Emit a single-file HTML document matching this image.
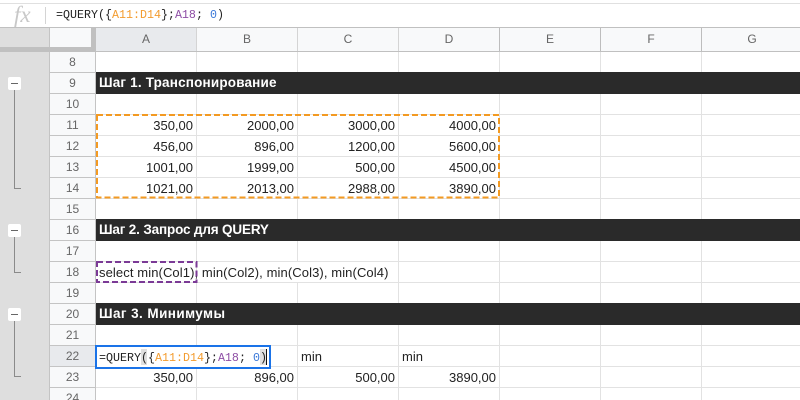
<!DOCTYPE html>
<html><head><meta charset="utf-8">
<style>
html,body{margin:0;padding:0;background:#fff}
#p{position:relative;width:800px;height:400px;overflow:hidden;background:#fff;font-family:"Liberation Sans",sans-serif;color:#222}
#p div{position:absolute;box-sizing:border-box}
#p svg{position:absolute;left:0;top:0}
.h{background:#e2e2e2;height:1px;left:96px;width:704px}
.v{background:#e2e2e2;width:1px;top:52px;height:348px}
.rn{left:50px;width:45px;height:20px;text-align:center;font:12px/20px "Liberation Sans",sans-serif;color:#666}
.rl{left:50px;width:45px;height:1px;background:#c4c4c4}
.ch{top:28px;height:23px;text-align:center;font:12px/23px "Liberation Sans",sans-serif;color:#666}
.cv{top:28px;height:23px;width:1px;background:#bdbdbd}
.c{font-size:13px;line-height:21px;height:21px;white-space:nowrap;color:#222}
.r{text-align:right;width:97px}
.bar{left:96px;width:704px;background:#2a2a2a;color:#fff;font-weight:bold;font-size:13.5px;line-height:22px;padding-left:3px;height:22px;white-space:nowrap}
.m{font-family:"Liberation Mono",monospace;white-space:pre}
.o{color:#f39c2f}.pu{color:#8e4ea5}.b{color:#3a78d8}
.gb{left:8px;width:13px;height:13px;background:#fff;border-radius:2px}
.gb i{position:absolute;left:3px;top:6px;width:7px;height:1px;background:#666}
.gl{background:#8a8a8a;width:1px;left:14px}
.gh{background:#8a8a8a;height:1px;left:14px;width:7px}
</style></head><body><div id="p">
<!-- formula bar -->
<div style="left:0;top:3px;width:800px;height:1px;background:#e0e0e0"></div>
<div style="left:14px;top:4px;width:20px;height:22px;font:italic 23px/22px 'Liberation Serif',serif;color:#c8c8c8">fx</div>
<div style="left:45px;top:7px;width:1px;height:17px;background:#d4d4d4"></div>
<div class="m" style="left:56px;top:7px;height:16px;font-size:11.67px;line-height:16px;color:#222">=QUERY({<span class="o">A11:D14</span>};<span class="pu">A18</span>; <span class="b">0</span>)</div>
<div style="left:0;top:27px;width:800px;height:1px;background:#c0c0c0"></div>

<!-- left gutter -->
<div style="left:0;top:28px;width:50px;height:372px;background:#dedede"></div>
<div style="left:49px;top:28px;width:1px;height:372px;background:#c4c4c4"></div>
<div style="left:50px;top:28px;width:41px;height:19px;background:#f8f9fa"></div>
<div style="left:91px;top:28px;width:5px;height:23px;background:#c0c0c0"></div>
<div style="left:0;top:47px;width:96px;height:5px;background:#c0c0c0"></div>
<div style="left:50px;top:52px;width:45px;height:348px;background:#f8f9fa"></div>
<div style="left:95px;top:52px;width:1px;height:348px;background:#c4c4c4"></div>

<!-- column header -->
<div style="left:96px;top:28px;width:704px;height:23px;background:#f8f9fa"></div>
<div style="left:96px;top:28px;width:100px;height:23px;background:#e8eaed"></div>
<div style="left:96px;top:51px;width:704px;height:1px;background:#c0c0c0"></div>
<div class="ch" style="left:96px;width:100px">A</div>
<div class="ch" style="left:197px;width:100px">B</div>
<div class="ch" style="left:298px;width:100px">C</div>
<div class="ch" style="left:399px;width:100px">D</div>
<div class="ch" style="left:500px;width:100px">E</div>
<div class="ch" style="left:601px;width:100px">F</div>
<div class="ch" style="left:702px;width:100px">G</div>
<div class="cv" style="left:196px;background:#d4d4d4"></div>
<div class="cv" style="left:297px;background:#d4d4d4"></div>
<div class="cv" style="left:398px;background:#d4d4d4"></div>
<div class="cv" style="left:499px"></div>
<div class="cv" style="left:600px"></div>
<div class="cv" style="left:701px"></div>

<!-- grid -->
<div class="v" style="left:196px"></div><div class="v" style="left:297px"></div><div class="v" style="left:398px"></div><div class="v" style="left:499px"></div><div class="v" style="left:600px"></div><div class="v" style="left:701px"></div>
<div class="h" style="top:72px"></div><div class="h" style="top:93px"></div><div class="h" style="top:114px"></div><div class="h" style="top:135px"></div><div class="h" style="top:156px"></div><div class="h" style="top:177px"></div><div class="h" style="top:198px"></div><div class="h" style="top:219px"></div><div class="h" style="top:240px"></div><div class="h" style="top:261px"></div><div class="h" style="top:282px"></div><div class="h" style="top:303px"></div><div class="h" style="top:324px"></div><div class="h" style="top:345px"></div><div class="h" style="top:366px"></div><div class="h" style="top:387px"></div>
<div style="left:197px;top:262px;width:200px;height:20px;background:#fff"></div>

<!-- row numbers -->
<div class="rl" style="top:72px"></div><div class="rl" style="top:93px"></div><div class="rl" style="top:114px"></div><div class="rl" style="top:135px"></div><div class="rl" style="top:156px"></div><div class="rl" style="top:177px"></div><div class="rl" style="top:198px"></div><div class="rl" style="top:219px"></div><div class="rl" style="top:240px"></div><div class="rl" style="top:261px"></div><div class="rl" style="top:282px"></div><div class="rl" style="top:303px"></div><div class="rl" style="top:324px"></div><div class="rl" style="top:345px"></div><div class="rl" style="top:366px"></div><div class="rl" style="top:387px"></div>
<div style="left:50px;top:346px;width:45px;height:20px;background:#e8eaed"></div>
<div class="rn" style="top:52px">8</div><div class="rn" style="top:73px">9</div><div class="rn" style="top:94px">10</div><div class="rn" style="top:115px">11</div><div class="rn" style="top:136px">12</div><div class="rn" style="top:157px">13</div><div class="rn" style="top:178px">14</div><div class="rn" style="top:199px">15</div><div class="rn" style="top:220px">16</div><div class="rn" style="top:241px">17</div><div class="rn" style="top:262px">18</div><div class="rn" style="top:283px">19</div><div class="rn" style="top:304px">20</div><div class="rn" style="top:325px">21</div><div class="rn" style="top:346px">22</div><div class="rn" style="top:367px">23</div><div class="rn" style="top:388px">24</div>

<!-- group controls -->
<div class="gb" style="top:77px"><i></i></div><div class="gl" style="top:90px;height:98px"></div><div class="gh" style="top:188px"></div>
<div class="gb" style="top:224px"><i></i></div><div class="gl" style="top:237px;height:35px"></div><div class="gh" style="top:272px"></div>
<div class="gb" style="top:308px"><i></i></div><div class="gl" style="top:321px;height:56px"></div><div class="gh" style="top:376px"></div>

<!-- dark bars -->
<div class="bar" style="top:72px;letter-spacing:.18px">Шаг 1. Транспонирование</div>
<div class="bar" style="top:219px;letter-spacing:-.16px">Шаг 2. Запрос для QUERY</div>
<div class="bar" style="top:303px;letter-spacing:.42px">Шаг 3. Минимумы</div>

<!-- data -->
<div class="c r" style="left:96px;top:115px">350,00</div><div class="c r" style="left:197px;top:115px">2000,00</div><div class="c r" style="left:298px;top:115px">3000,00</div><div class="c r" style="left:399px;top:115px">4000,00</div>
<div class="c r" style="left:96px;top:136px">456,00</div><div class="c r" style="left:197px;top:136px">896,00</div><div class="c r" style="left:298px;top:136px">1200,00</div><div class="c r" style="left:399px;top:136px">5600,00</div>
<div class="c r" style="left:96px;top:157px">1001,00</div><div class="c r" style="left:197px;top:157px">1999,00</div><div class="c r" style="left:298px;top:157px">500,00</div><div class="c r" style="left:399px;top:157px">4500,00</div>
<div class="c r" style="left:96px;top:178px">1021,00</div><div class="c r" style="left:197px;top:178px">2013,00</div><div class="c r" style="left:298px;top:178px">2988,00</div><div class="c r" style="left:399px;top:178px">3890,00</div>
<div class="c" style="left:99px;top:262px;letter-spacing:.1px">select min(Col1), min(Col2), min(Col3), min(Col4)</div>
<div class="c" style="left:301px;top:346px">min</div><div class="c" style="left:402px;top:346px">min</div>
<div class="c r" style="left:96px;top:367px">350,00</div><div class="c r" style="left:197px;top:367px">896,00</div><div class="c r" style="left:298px;top:367px">500,00</div><div class="c r" style="left:399px;top:367px">3890,00</div>

<!-- dashed selections -->
<svg width="800" height="400" fill="none" stroke-width="2" stroke-dasharray="6 3">
<rect x="97" y="115" width="402" height="82.5" stroke="#f39a22"/>
<rect x="97" y="262" width="99.5" height="20" stroke="#7b3a96"/>
</svg>

<!-- active cell -->
<div style="left:95px;top:345px;width:176px;height:24px;background:#fff;border:2px solid #1a73e8"></div>
<div style="left:141px;top:349px;width:6px;height:16px;background:#dfdfdf"></div>
<div style="left:260px;top:349px;width:6px;height:16px;background:#dfdfdf"></div>
<div class="m" style="left:99px;top:350px;height:16px;font-size:11.67px;line-height:16px;color:#222">=QUERY({<span class="o">A11:D14</span>};<span class="pu">A18</span>; <span class="b">0</span>)</div>
<div style="left:266px;top:349px;width:1px;height:16px;background:#111"></div>
</div></body></html>
